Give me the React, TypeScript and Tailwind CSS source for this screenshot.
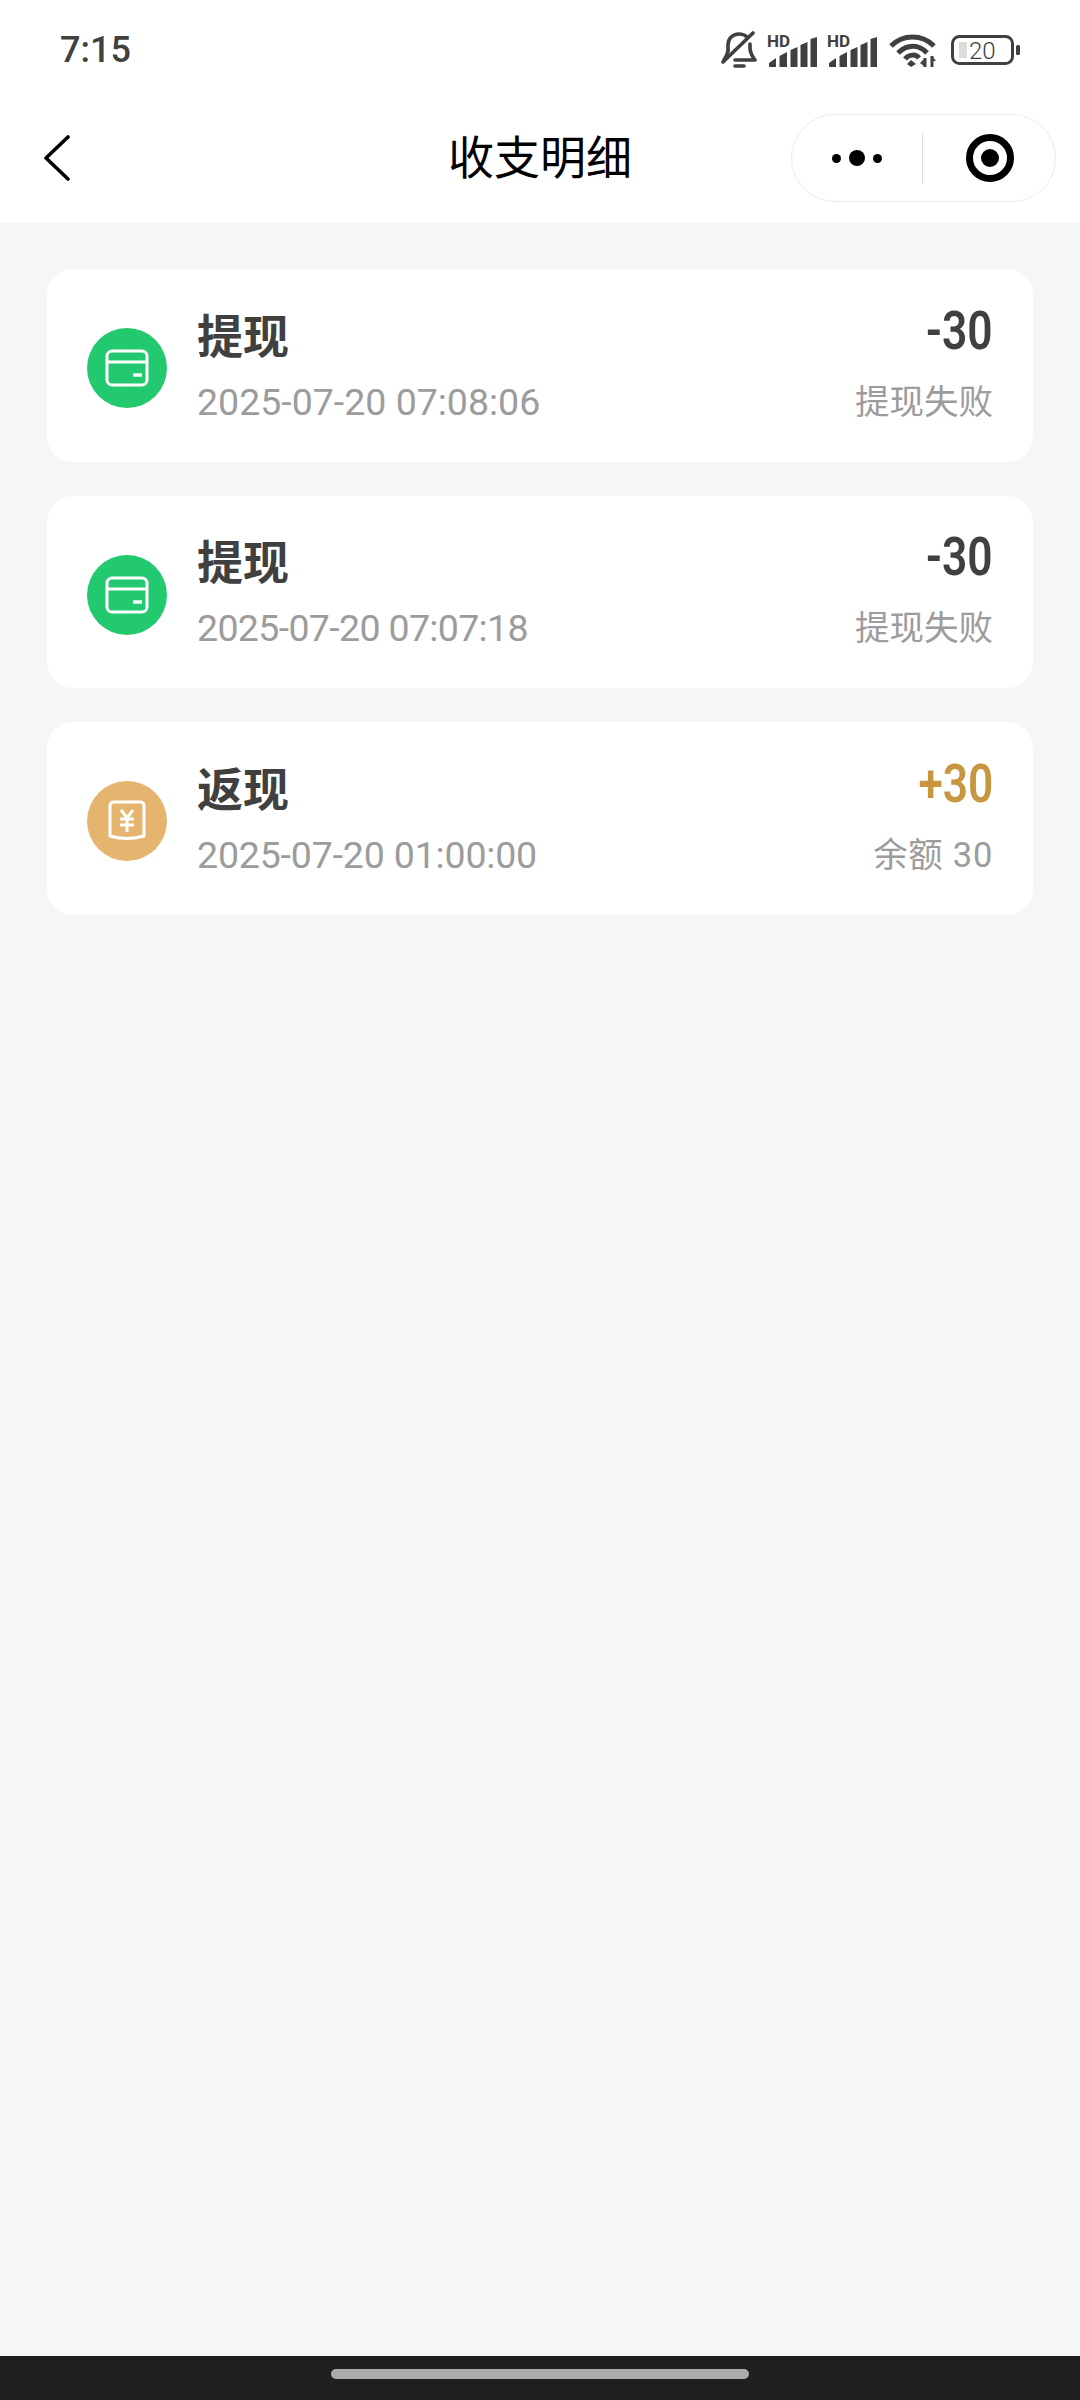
const cjk = "font-['Roboto','Noto_Sans_CJK_SC',sans-serif]";

interface RecordItem {
  kind: "card" | "cash";
  title: string;
  time: string;
  timeTracking: string;
  amount: string;
  note: string;
}

const records: RecordItem[] = [
  { kind: "card", title: "提现", time: "2025-07-20 07:08:06", timeTracking: "tracking-[0px]", amount: "-30", note: "提现失败" },
  { kind: "card", title: "提现", time: "2025-07-20 07:07:18", timeTracking: "tracking-[-0.65px]", amount: "-30", note: "提现失败" },
  { kind: "cash", title: "返现", time: "2025-07-20 01:00:00", timeTracking: "tracking-[-0.17px]", amount: "+30", note: "余额 30" },
];

function BellOff() {
  return (
    <svg width="36" height="38" viewBox="0 0 36 38" fill="none" stroke="#404040" strokeWidth="3.6" strokeLinecap="round" strokeLinejoin="round">
      <path d="M7 20V14C7 8 11 3 18 3C21 3 24 4 26 6" />
      <path d="M29 13V17C29 22 31 25 34 29H14" />
      <path d="M7 20C6 24 5 26 3 29" />
      <path d="M32 2L2 31" />
      <path d="M14 35H23" />
    </svg>
  );
}

function Signal() {
  return (
    <svg width="50" height="38" viewBox="0 0 50 38" fill="#404040">
      <text x="0" y="16" fontFamily="Roboto, sans-serif" fontWeight="700" fontSize="17">HD</text>
      <g transform="translate(0 5)">
        <path d="M2 27L9 22V31H3Q2 31 2 30Z" />
        <path d="M12.5 20L20 16V31H12.5Z" />
        <path d="M23.5 14L30.5 11V31H23.5Z" />
        <path d="M33.5 9L40.5 6V31H33.5Z" />
        <path d="M43.5 3L50 1V31H43.5Z" />
      </g>
    </svg>
  );
}

function Wifi() {
  return (
    <svg width="48" height="36" viewBox="0 0 48 36" fill="none" stroke="#404040" strokeWidth="5">
      <path d="M2 14C14 2 33 2 45 14" />
      <path d="M9 21C18 12 30 12 38 21" />
      <path d="M16 27C20 22 27 22 30 26" />
      <path d="M22 28L27 32L22 35L18 32Z" fill="#404040" stroke="none" />
      <path d="M36 26V35M43 24V35" strokeWidth="3" />
      <path d="M31 31L36 26V35ZM43 24L47 29H43Z" fill="#404040" stroke="none" />
    </svg>
  );
}

function Battery() {
  return (
    <svg width="69" height="30" viewBox="0 0 69 30">
      <rect x="1.5" y="1.5" width="60" height="27" rx="7" fill="none" stroke="#404040" strokeWidth="3" />
      <rect x="8" y="7" width="8" height="16" fill="#dcdcdc" />
      <text x="18" y="23.5" fontFamily="Roboto, sans-serif" fontWeight="300" fontSize="24" fill="#404040">20</text>
      <rect x="65" y="10" width="4" height="10" rx="1.5" fill="#404040" />
    </svg>
  );
}

function CardIcon() {
  return (
    <svg width="44" height="38" viewBox="0 0 44 38" fill="none" stroke="#ffffff" strokeWidth="3">
      <rect x="2" y="2" width="40" height="34" rx="5" />
      <path d="M2 13H42" />
      <path d="M28 26H37" strokeWidth="3.4" />
    </svg>
  );
}

function CashIcon() {
  return (
    <svg width="38" height="42" viewBox="0 0 38 42" fill="none" stroke="#ffffff" strokeWidth="3">
      <path d="M6 2H32Q36 2 36 6V36Q19 41 2 36V6Q2 2 6 2Z" />
      <path d="M13 10L19 18L25 10M12 19H26M12 25H26M19 18V32" />
    </svg>
  );
}

function RecordRow({ item }: { item: RecordItem }) {
  const isCash = item.kind === "cash";
  return (
    <div className="h-[192.5px] bg-white rounded-[26px] flex items-center pl-[40px] pr-[40px]">
      <div className={`w-[80px] h-[80px] rounded-full flex items-center justify-center shrink-0 translate-y-[3px] ${isCash ? "bg-[#e5b46f]" : "bg-[#22c96f]"}`}>
        {isCash ? <CashIcon /> : <CardIcon />}
      </div>
      <div className="ml-[30px] flex-1 min-w-0 flex flex-col pt-[3px]">
        <span className="text-[46px] leading-[60px] font-semibold text-[#404040]">{item.title}</span>
        <span className={`text-[37.5px] leading-[50px] text-[#9c9c9c] font-normal mt-[10px] ${item.timeTracking}`}>{item.time}</span>
      </div>
      <div className="flex flex-col items-end pb-[3px]">
        <span className={`text-[54px] leading-[60px] font-semibold scale-x-[0.82] origin-right ${isCash ? "text-[#c8963f]" : "text-[#404040]"}`}>
          {item.amount}
        </span>
        <span className={`text-[34.5px] leading-[50px] text-[#9c9c9c] font-normal mt-[16px] ${isCash ? "tracking-[0.7px]" : ""}`}>{item.note}</span>
      </div>
    </div>
  );
}

export default function App() {
  return (
    <div className={`w-[1080px] h-[2400px] flex flex-col bg-[#f5f6f8] ${cjk}`}>
      <div className="h-[100px] bg-white flex items-center pl-[60px] pr-[60px]">
        <span className="text-[36px] font-medium text-[#404040]">7:15</span>
        <div className="ml-auto flex items-center">
          <BellOff />
          <div className="ml-[10px]"><Signal /></div>
          <div className="ml-[10px]"><Signal /></div>
          <div className="ml-[12px]"><Wifi /></div>
          <div className="ml-[14px]"><Battery /></div>
        </div>
      </div>

      <div className="h-[123px] bg-white pb-[7px] grid grid-cols-[1fr_auto_1fr] items-center">
        <div className="pl-[44px]">
          <svg width="26" height="46" viewBox="0 0 26 46" fill="none" stroke="#000000" strokeWidth="3.6" strokeLinecap="round" strokeLinejoin="round">
            <path d="M24 2L2 23L24 44" />
          </svg>
        </div>
        <span className="text-[46px] text-black font-normal">收支明细</span>
        <div className="flex justify-end pr-[24px]">
          <div className="w-[265px] h-[88px] rounded-full border border-[#ececec] flex items-center">
            <div className="flex-1 flex items-center justify-center gap-[8px]">
              <span className="w-[9px] h-[9px] rounded-full bg-black" />
              <span className="w-[16px] h-[16px] rounded-full bg-black" />
              <span className="w-[9px] h-[9px] rounded-full bg-black" />
            </div>
            <div className="w-[1px] h-[51px] bg-[#dddddd]" />
            <div className="flex-1 flex items-center justify-center pl-[2px]">
              <div className="w-[48px] h-[48px] rounded-full border-[7px] border-black flex items-center justify-center">
                <div className="w-[18px] h-[18px] rounded-full bg-black" />
              </div>
            </div>
          </div>
        </div>
      </div>

      <div className="flex-1 pl-[47px] pr-[47px] pt-[46px] flex flex-col gap-[34px]">
        {records.map((item) => (
          <RecordRow key={item.time} item={item} />
        ))}
      </div>

      <div className="h-[44px] bg-[#1f1f1f] flex justify-center pt-[13px]">
        <div className="w-[418px] h-[10px] rounded-full bg-[#ababab]" />
      </div>
    </div>
  );
}
